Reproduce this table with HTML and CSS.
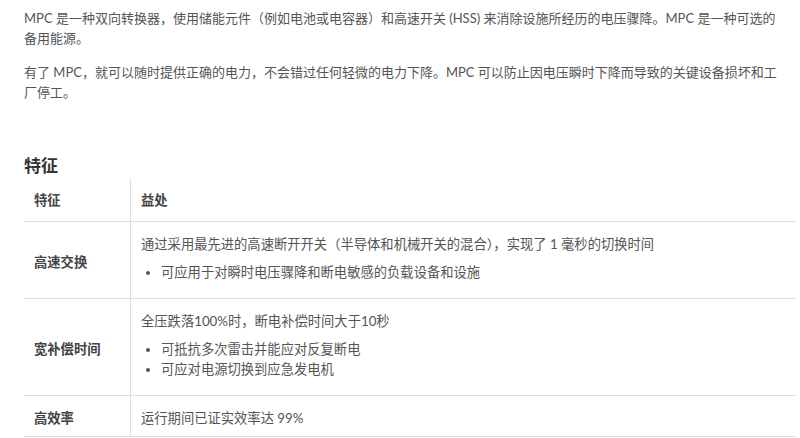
FILE: index.html
```html
<!DOCTYPE html>
<html lang="zh-CN">
<head>
    <meta charset="UTF-8">
    <meta name="viewport" content="width=device-width, initial-scale=1.0">
    <title>MPC 特征</title>
    <link rel="stylesheet" href="styles.css">
</head>
<body>
    <div class="intro">
        <p>MPC 是一种双向转换器，使用储能元件（例如电池或电容器）和高速开关 (HSS) 来消除设施所经历的电压骤降。MPC 是一种可选的备用能源。</p>
        <p>有了 MPC，就可以随时提供正确的电力，不会错过任何轻微的电力下降。MPC 可以防止因电压瞬时下降而导致的关键设备损坏和工厂停工。</p>
    </div>

    <h2>特征</h2>
    <table class="features">
        <thead>
            <tr>
                <th>特征</th>
                <th>益处</th>
            </tr>
        </thead>
        <tbody>
            <tr>
                <td class="label">高速交换</td>
                <td>
                    <p>通过采用最先进的高速断开开关（半导体和机械开关的混合），实现了 1 毫秒的切换时间</p>
                    <ul>
                        <li>可应用于对瞬时电压骤降和断电敏感的负载设备和设施</li>
                    </ul>
                </td>
            </tr>
            <tr>
                <td class="label">宽补偿时间</td>
                <td>
                    <p>全压跌落100%时，断电补偿时间大于10秒</p>
                    <ul>
                        <li>可抵抗多次雷击并能应对反复断电</li>
                        <li>可应对电源切换到应急发电机</li>
                    </ul>
                </td>
            </tr>
            <tr>
                <td class="label">高效率</td>
                <td>
                    <p>运行期间已证实效率达 99%</p>
                </td>
            </tr>
        </tbody>
    </table>
</body>
</html>
```

FILE: styles.css
```css
body {
    font-family: Lato, "Noto Sans CJK SC", sans-serif;
    font-size: 13.3px;
    color: #555;
    margin: 0;
    padding: 8px 4px 0 24px;
    background-color: #fff;
}

.intro {
    max-width: 764px;
    font-size: 13px;
}

.intro p {
    line-height: 20px;
    margin: 0 0 14px;
}

h2 {
    font-size: 17px;
    line-height: 22px;
    color: #333;
    margin: 53px 0 2px;
}

.features {
    width: 100%;
    border-collapse: collapse;
}

.features th, .features td {
    text-align: left;
    line-height: 20px;
    border-bottom: 1px solid #ddd;
    vertical-align: middle;
}

.features th {
    padding: 11px 10px;
    color: #444;
}

.features td {
    padding: 12px 10px 8px;
}

.features th + th, .features td + td {
    border-left: 1px solid #ddd;
}

.features th:first-child, .features td:first-child {
    width: 86px;
}

.features .label {
    font-weight: bold;
    color: #444;
}

.features td p {
    margin: 0 0 8px;
}

.features td p:last-child {
    margin-bottom: 0;
}

.features ul {
    margin: 0 0 8px;
    padding-left: 20px;
}
```
